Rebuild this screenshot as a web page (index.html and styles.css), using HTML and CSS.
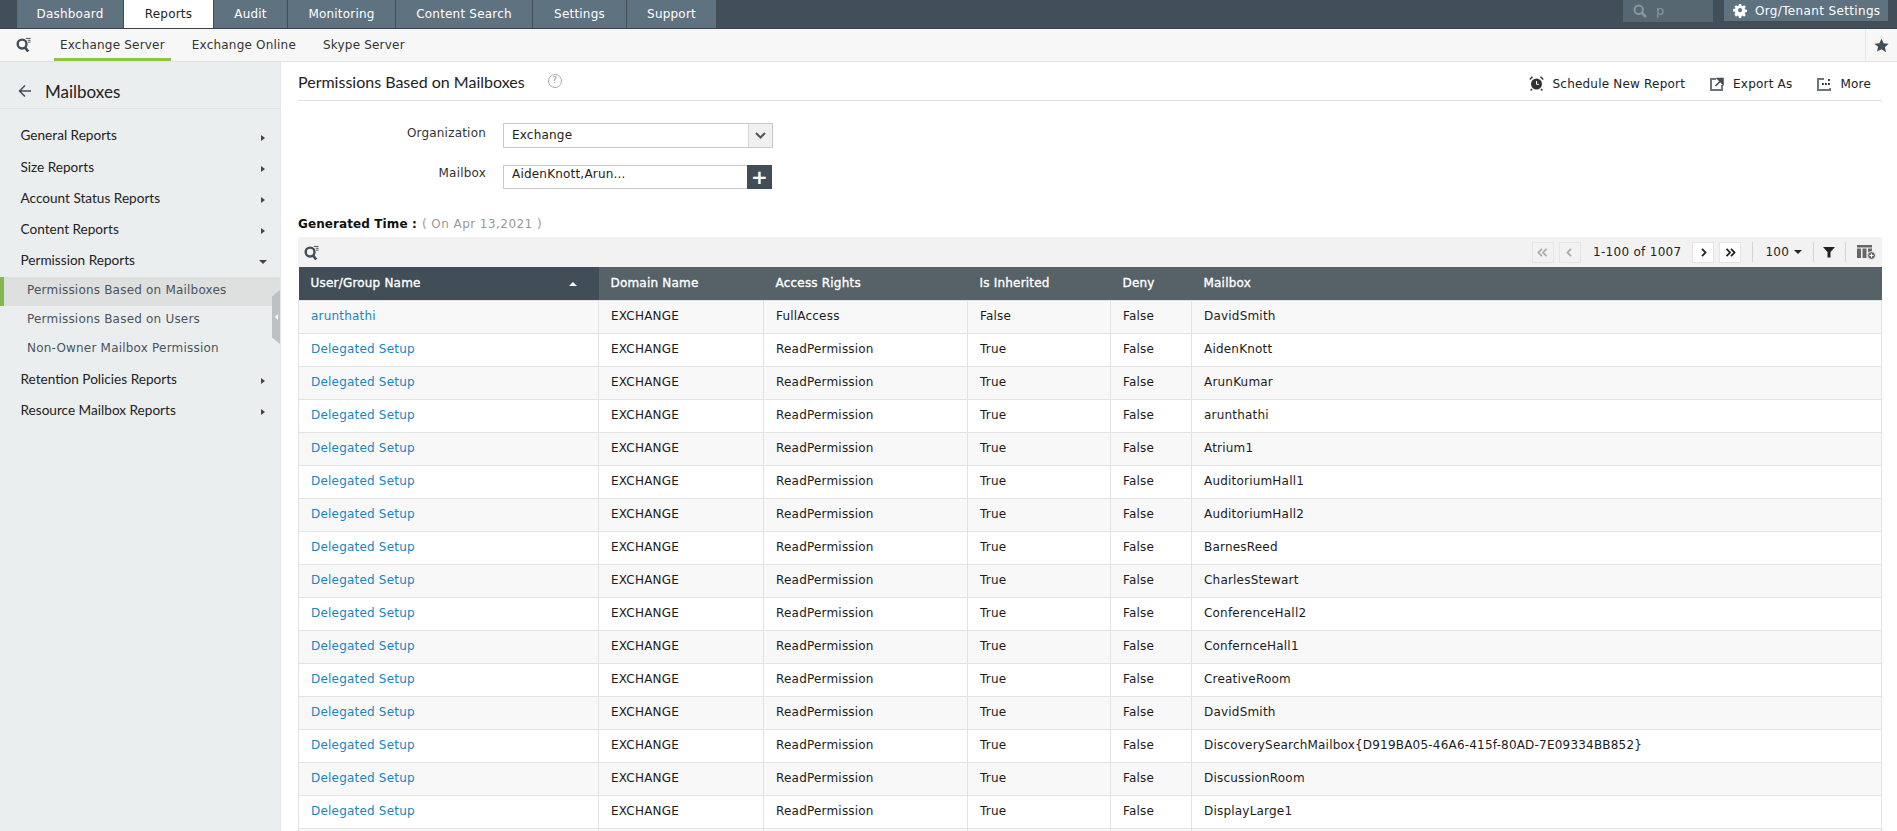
FILE: index.html
```html
<!DOCTYPE html>
<html lang="en">
<head>
<meta charset="utf-8">
<title>Permissions Based on Mailboxes</title>
<link rel="stylesheet" href="styles.css">
</head>
<body>
<svg class="defs" width="0" height="0" aria-hidden="true">
  <symbol id="ic-search-list" viewBox="0 0 16 16">
    <circle cx="6.500" cy="7.500" r="4.700" fill="none" stroke="currentColor" stroke-width="2.600"/>
    <path d="M9.500 11l3.600 4.500" stroke="currentColor" stroke-width="2.800" fill="none"/>
    <path d="M10.500 1.500h5M12.500 3.500h3M13 5.500h2.500" stroke="currentColor" stroke-width="1" fill="none"/>
  </symbol>
</svg>
<header class="topbar">
  <nav class="tabs">
    <a class="tab t-dash">Dashboard</a>
    <a class="tab t-rep active">Reports</a>
    <a class="tab t-aud">Audit</a>
    <a class="tab t-mon">Monitoring</a>
    <a class="tab t-con">Content Search</a>
    <a class="tab t-set">Settings</a>
    <a class="tab t-sup">Support</a>
  </nav>
  <div class="top-right">
    <div class="top-search">
      <svg class="ic-s" viewBox="0 0 14 14"><circle cx="5.700" cy="5.700" r="4.200" fill="none" stroke="#8b969d" stroke-width="2"/><path d="M8.600 8.600l4.400 4.400" stroke="#8b969d" stroke-width="2.600"/></svg>
      <span>p</span>
    </div>
    <div class="org-btn">
      <svg class="ic-gear" viewBox="0 0 14 14"><path fill="#fff" fill-rule="evenodd" d="M5.700 0h2.600l.3 2 1.300.6L11.600 1.400l1.900 1.900-1.200 1.700.6 1.300 2.100.3v2.700l-2.100.3-.6 1.300 1.200 1.700-1.900 1.900-1.700-1.200-1.300.6-.3 2.100H5.700l-.3-2.100-1.300-.6-1.700 1.200L.5 11.900l1.200-1.700-.6-1.300L-.9 8.600V5.900l2-.3.6-1.300L.5 3.300 2.400 1.400l1.700 1.200 1.300-.6zM7 4.800a2.300 2.300 0 1 0 0 4.600 2.300 2.300 0 0 0 0-4.600z" transform="translate(.9 -.1) scale(.88)"/></svg>
      <span>Org/Tenant Settings</span>
    </div>
  </div>
</header>

<div class="subbar">
  <svg class="ic-list"><use href="#ic-search-list"/></svg>
  <a class="sub active">Exchange Server</a>
  <a class="sub">Exchange Online</a>
  <a class="sub">Skype Server</a>
  <div class="star-cell">
    <svg width="15" height="15" viewBox="0 0 24 24"><path fill="#414e57" d="M12 1l3.400 7.300 8 1-5.900 5.500 1.600 7.900L12 17.800l-7.100 3.900 1.600-7.900L.6 9.300l8-1z"/></svg>
  </div>
</div>

<div class="layout">
  <aside class="sidebar">
    <div class="side-head">
      <svg class="ic-back" viewBox="0 0 14 14"><path d="M13 7H2M7 1.500L1.500 7 7 12.500" fill="none" stroke="#414e57" stroke-width="1.500"/></svg>
      <span>Mailboxes</span>
    </div>
    <ul class="menu">
      <li class="group first">General Reports<i class="arr"></i></li>
      <li class="group">Size Reports<i class="arr"></i></li>
      <li class="group">Account Status Reports<i class="arr"></i></li>
      <li class="group">Content Reports<i class="arr"></i></li>
      <li class="group open">Permission Reports<i class="arr-d"></i></li>
      <li class="item current">Permissions Based on Mailboxes</li>
      <li class="item">Permissions Based on Users</li>
      <li class="item">Non-Owner Mailbox Permission</li>
      <li class="group">Retention Policies Reports<i class="arr"></i></li>
      <li class="group">Resource Mailbox Reports<i class="arr"></i></li>
    </ul>
    <div class="collapse"><i></i></div>
  </aside>

  <main class="content">
    <div class="title-row">
      <h1>Permissions Based on Mailboxes</h1>
      <span class="help">?</span>
      <div class="actions">
        <a class="action">
          <svg width="15" height="15" viewBox="0 0 15 15"><circle cx="7.500" cy="8" r="5.500" fill="#333"/><path d="M7.500 5v3.300h2.500" fill="none" stroke="#fff" stroke-width="1"/><path d="M.8 3.500L3.500.8M14.200 3.500L11.500.8M3 13l-1.300 1.500M12 13l1.300 1.500" stroke="#333" stroke-width="1.500"/></svg>
          Schedule New Report</a>
        <a class="action">
          <svg width="14" height="14" viewBox="0 0 14 14"><path d="M6 2H1v11h11V8" fill="none" stroke="#6b757b" stroke-width="2"/><path d="M5.500 9L10 4.500M7.500 1.500h5.500v5.500z" stroke="#414e57" stroke-width="1.600" fill="#414e57"/></svg>
          Export As</a>
        <a class="action">
          <svg width="14" height="14" viewBox="0 0 14 14"><path d="M7 2H1v11h12v-2" fill="none" stroke="#6b757b" stroke-width="2"/><path d="M5 7h1.800M8 7h1.800M11 7h1.800M11 3h1.800" stroke="#333" stroke-width="1.800"/></svg>
          More</a>
      </div>
    </div>

    <form class="filters">
      <div class="f-row f-org">
        <label>Organization</label>
        <div class="select"><span>Exchange</span><b class="sel-arrow"><svg width="11" height="7" viewBox="0 0 11 7"><path d="M1 1l4.500 4.500L10 1" fill="none" stroke="#555" stroke-width="2"/></svg></b></div>
      </div>
      <div class="f-row">
        <label>Mailbox</label>
        <div class="picker"><span>AidenKnott,Arun...</span><b class="plus">+</b></div>
      </div>
    </form>

    <div class="generated"><strong>Generated Time :</strong> <span>( On Apr 13,2021 )</span></div>

    <div class="toolbar">
      <svg class="ic-list-t"><use href="#ic-search-list"/></svg>
      <div class="pager">
        <span class="pg off"><svg width="11" height="9" viewBox="0 0 11 9"><path d="M5 .8L1.500 4.500 5 8.200M9.500 .8L6 4.500l3.500 3.700" fill="none" stroke="currentColor" stroke-width="1.800"/></svg></span>
        <span class="pg off"><svg width="7" height="9" viewBox="0 0 7 9"><path d="M5 .8L1.500 4.500 5 8.200" fill="none" stroke="currentColor" stroke-width="1.800"/></svg></span>
        <span class="count">1-100 of 1007</span>
        <span class="pg"><svg width="7" height="9" viewBox="0 0 7 9"><path d="M2 .8l3.500 3.700L2 8.200" fill="none" stroke="currentColor" stroke-width="1.800"/></svg></span>
        <span class="pg"><svg width="11" height="9" viewBox="0 0 11 9"><path d="M1.500 .8L5 4.500 1.500 8.200M6 .8l3.500 3.700L6 8.200" fill="none" stroke="currentColor" stroke-width="1.800"/></svg></span>
        <i class="sep s1"></i>
        <span class="per">100<i class="caret"></i></span>
        <i class="sep"></i>
        <svg class="ic-filter" viewBox="0 0 12 12"><path fill="#222" d="M0 1h12L7.500 6v5.500h-3V6z"/></svg>
        <i class="sep"></i>
        <svg class="ic-cols" viewBox="0 0 19 16"><path fill="#666" d="M0 1h15v2.500H0zM0 4.500h4V14H0zM5.500 4.500h4V14h-4zM11 4.500h4V9h-4z"/><circle cx="14.500" cy="11.500" r="4" fill="#666" stroke="#f2f2f2"/><path d="M12.500 11.500h4M14.500 9.500v4" stroke="#fff"/></svg>
      </div>
    </div>

    <table class="grid">
      <colgroup><col class="c1"><col class="c2"><col class="c3"><col class="c4"><col class="c5"><col></colgroup>
      <thead>
        <tr><th class="sorted">User/Group Name<i class="sort"></i></th><th>Domain Name</th><th>Access Rights</th><th>Is Inherited</th><th>Deny</th><th>Mailbox</th></tr>
      </thead>
      <tbody>
        <tr><td><a>arunthathi</a></td><td>EXCHANGE</td><td>FullAccess</td><td>False</td><td>False</td><td>DavidSmith</td></tr>
        <tr><td><a>Delegated Setup</a></td><td>EXCHANGE</td><td>ReadPermission</td><td>True</td><td>False</td><td>AidenKnott</td></tr>
        <tr><td><a>Delegated Setup</a></td><td>EXCHANGE</td><td>ReadPermission</td><td>True</td><td>False</td><td>ArunKumar</td></tr>
        <tr><td><a>Delegated Setup</a></td><td>EXCHANGE</td><td>ReadPermission</td><td>True</td><td>False</td><td>arunthathi</td></tr>
        <tr><td><a>Delegated Setup</a></td><td>EXCHANGE</td><td>ReadPermission</td><td>True</td><td>False</td><td>Atrium1</td></tr>
        <tr><td><a>Delegated Setup</a></td><td>EXCHANGE</td><td>ReadPermission</td><td>True</td><td>False</td><td>AuditoriumHall1</td></tr>
        <tr><td><a>Delegated Setup</a></td><td>EXCHANGE</td><td>ReadPermission</td><td>True</td><td>False</td><td>AuditoriumHall2</td></tr>
        <tr><td><a>Delegated Setup</a></td><td>EXCHANGE</td><td>ReadPermission</td><td>True</td><td>False</td><td>BarnesReed</td></tr>
        <tr><td><a>Delegated Setup</a></td><td>EXCHANGE</td><td>ReadPermission</td><td>True</td><td>False</td><td>CharlesStewart</td></tr>
        <tr><td><a>Delegated Setup</a></td><td>EXCHANGE</td><td>ReadPermission</td><td>True</td><td>False</td><td>ConferenceHall2</td></tr>
        <tr><td><a>Delegated Setup</a></td><td>EXCHANGE</td><td>ReadPermission</td><td>True</td><td>False</td><td>ConfernceHall1</td></tr>
        <tr><td><a>Delegated Setup</a></td><td>EXCHANGE</td><td>ReadPermission</td><td>True</td><td>False</td><td>CreativeRoom</td></tr>
        <tr><td><a>Delegated Setup</a></td><td>EXCHANGE</td><td>ReadPermission</td><td>True</td><td>False</td><td>DavidSmith</td></tr>
        <tr><td><a>Delegated Setup</a></td><td>EXCHANGE</td><td>ReadPermission</td><td>True</td><td>False</td><td>DiscoverySearchMailbox{D919BA05-46A6-415f-80AD-7E09334BB852}</td></tr>
        <tr><td><a>Delegated Setup</a></td><td>EXCHANGE</td><td>ReadPermission</td><td>True</td><td>False</td><td>DiscussionRoom</td></tr>
        <tr><td><a>Delegated Setup</a></td><td>EXCHANGE</td><td>ReadPermission</td><td>True</td><td>False</td><td>DisplayLarge1</td></tr>
        <tr><td></td><td></td><td></td><td></td><td></td><td></td></tr>
      </tbody>
    </table>
  </main>
</div>
</body>
</html>
```
FILE: styles.css
```css
* { box-sizing: border-box; }
html, body { margin: 0; height: 831px; overflow: hidden; }
body { font: 12px/16px "DejaVu Sans", Verdana, sans-serif; color: #222; background: #fff; letter-spacing: .2px; }
.defs { position: absolute; }
a { color: inherit; text-decoration: none; }

.topbar { height: 29px; background: #434f58; display: flex; justify-content: space-between; padding-left: 17px; border-bottom: 1px solid #38434b; }
.tabs { display: flex; gap: 1px; height: 28px; }
.tab { background: #5f727f; color: #fff; display: flex; align-items: center; justify-content: center; height: 28px; }
.tab.active { background: #fff; color: #222; }
.t-dash { width: 106px; } .t-rep { width: 89px; } .t-aud { width: 73px; } .t-mon { width: 107px; }
.t-con { width: 136px; } .t-set { width: 93px; } .t-sup { width: 89px; }
.top-right { display: flex; gap: 11px; padding-right: 9px; align-items: flex-start; }
.top-search { width: 90px; height: 22px; background: #566771; color: #8b969d; display: flex; align-items: center; gap: 9px; padding-left: 10px; font-size: 13px; }
.ic-s { width: 14px; height: 14px; }
.org-btn { width: 164px; height: 21px; background: #5f727f; color: #fff; display: flex; align-items: center; gap: 8px; padding-left: 9px; letter-spacing: .35px; }
.ic-gear { width: 14px; height: 14px; }

.subbar { height: 33px; background: #f7f7f7; border-bottom: 1px solid #e2e2e2; display: flex; padding-left: 16px; align-items: stretch; }
.ic-list { width: 15px; height: 15px; color: #414e57; margin: 8px 23px 0 0; }
.sub { display: flex; align-items: center; padding: 0 6px; color: #333; margin-right: 15px; }
.sub.active { border-bottom: 3px solid #8cc63f; padding-top: 3px; }
.star-cell { margin-left: auto; width: 32px; border-left: 1px solid #e6e6e6; display: flex; align-items: center; justify-content: center; }

.layout { display: flex; height: 769px; }
.sidebar { width: 281px; flex: none; background: #ebeeef; border-right: 1px solid #e6e8e9; position: relative; }
.side-head { height: 47px; padding: 12px 0 0 18px; border-bottom: 1px solid #dfe2e3; display: flex; align-items: center; gap: 13px; font: 17px "Lato", sans-serif; color: #222; letter-spacing: 0; margin-right: -1px; }
.ic-back { width: 14px; height: 14px; }
.menu { list-style: none; margin: 12px 0 0; padding: 0; }
.group { height: 31px; font: 13.600px/31px "Lato", sans-serif; letter-spacing: 0; padding-left: 20.500px; position: relative; color: #222; }
.group.first { line-height: 29px; }
.group.open { margin-bottom: 1px; }
.arr { position: absolute; left: 261px; top: 14px; border-left: 4px solid #444; border-top: 3.500px solid transparent; border-bottom: 3.500px solid transparent; }
.arr-d { position: absolute; left: 259px; top: 15px; border-top: 4px solid #444; border-left: 4px solid transparent; border-right: 4px solid transparent; }
.item { height: 29px; line-height: 27px; padding-left: 27px; color: #4a545b; }
.item.current { background: #dedfdf; border-left: 4px solid #84b84c; padding-left: 23px; }
.collapse { position: absolute; right: 0; top: 228px; width: 8px; height: 54px; background: #bcc1c3; clip-path: polygon(100% 0, 100% 100%, 0 88%, 0 12%); display: flex; align-items: center; justify-content: center; }
.collapse i { border-right: 3px solid #fff; border-top: 3px solid transparent; border-bottom: 3px solid transparent; }

.content { flex: 1; min-width: 0; padding: 0 15px 0 17px; }
.title-row { height: 39px; border-bottom: 1px solid #e3e3e3; display: flex; align-items: center; }
h1 { font: 16px "Lato", sans-serif; color: #222; margin: 0; letter-spacing: 0; }
.help { width: 14px; height: 14px; margin-left: 23px; border: 1.500px solid #aaa; border-radius: 50%; color: #999; font-size: 9px; line-height: 11px; text-align: center; letter-spacing: 0; }
.actions { margin-left: auto; display: flex; gap: 25px; padding: 5px 11px 0 0; }
.action { display: flex; align-items: center; gap: 9px; color: #222; }

.filters { padding-top: 22px; height: 115px; margin: 0; }
.f-row { display: flex; }
.f-org { height: 42px; }
.f-row label { width: 188px; text-align: right; color: #333; }
.f-org label { padding-top: 2px; }
.select, .picker { margin-left: 17px; position: relative; }
.select { width: 270px; height: 25px; border: 1px solid #c9c9c9; padding: 3px 8px; display: flex; }
.sel-arrow { position: absolute; right: 0; top: 0; width: 24px; height: 23px; background: #f0f0f0; border-left: 1px solid #d6d6d6; display: flex; align-items: center; justify-content: center; }
.picker { width: 269px; height: 24px; border: 1px solid #c9c9c9; padding: 0 8px; }
.plus { position: absolute; right: -1px; top: -1px; width: 25px; height: 24px; background: #414e57; color: #fff; font: 700 20px/24px "DejaVu Sans", sans-serif; text-align: center; letter-spacing: 0; }

.generated { height: 21px; }
.generated strong { color: #111; font-weight: 700; letter-spacing: .1px; }
.generated span { color: #999; letter-spacing: .45px; margin-left: 1px; }

.toolbar { height: 30px; background: #f2f2f2; display: flex; justify-content: space-between; align-items: center; padding-left: 6px; }
.ic-list-t { width: 15px; height: 15px; color: #414e57; }
.pager { display: flex; align-items: center; height: 100%; padding-right: 6px; }
.pg { width: 22px; height: 21px; border: 1px solid #e6e6e6; background: #fff; display: flex; align-items: center; justify-content: center; margin-right: 5px; color: #222; }
.pg + .sep { margin-left: 6px; }
.pg.off { background: #f2f2f2; color: #aaa; }
.count { margin: 0 11px 0 7px; color: #222; letter-spacing: .3px; white-space: nowrap; }
.sep { width: 1px; height: 20px; background: #d4d4d4; }
.s1 { margin-right: 12px; }
.per { color: #222; display: flex; align-items: center; gap: 5px; margin-right: 11px; }
.caret { border-top: 4px solid #222; border-left: 4px solid transparent; border-right: 4px solid transparent; }
.ic-filter { width: 12px; height: 12px; margin: 0 10px 0 9px; }
.ic-cols { width: 19px; height: 16px; margin-left: 11px; }

.grid { width: 100%; table-layout: fixed; border-collapse: collapse; }
.c1 { width: 300px; } .c2 { width: 165px; } .c3 { width: 204px; } .c4 { width: 143px; } .c5 { width: 81px; }
.grid th { height: 33px; background: #566168; color: #fff; text-align: left; padding: 0 12px; font-weight: 400; font-size: 12px; letter-spacing: .2px; -webkit-text-stroke: .35px #fff; }
.grid th.sorted { background: #414e57; position: relative; }
.sort { position: absolute; right: 22px; top: 15px; border-bottom: 4px solid #fff; border-left: 4px solid transparent; border-right: 4px solid transparent; }
.grid td { height: 33px; padding: 0 12px 2px; border: 1px solid #e3e3e3; color: #1b1b1b; white-space: nowrap; }
.grid tbody tr:nth-child(odd) td { background: #f8f8f8; }
.grid a { color: #1a84c4; }
```
